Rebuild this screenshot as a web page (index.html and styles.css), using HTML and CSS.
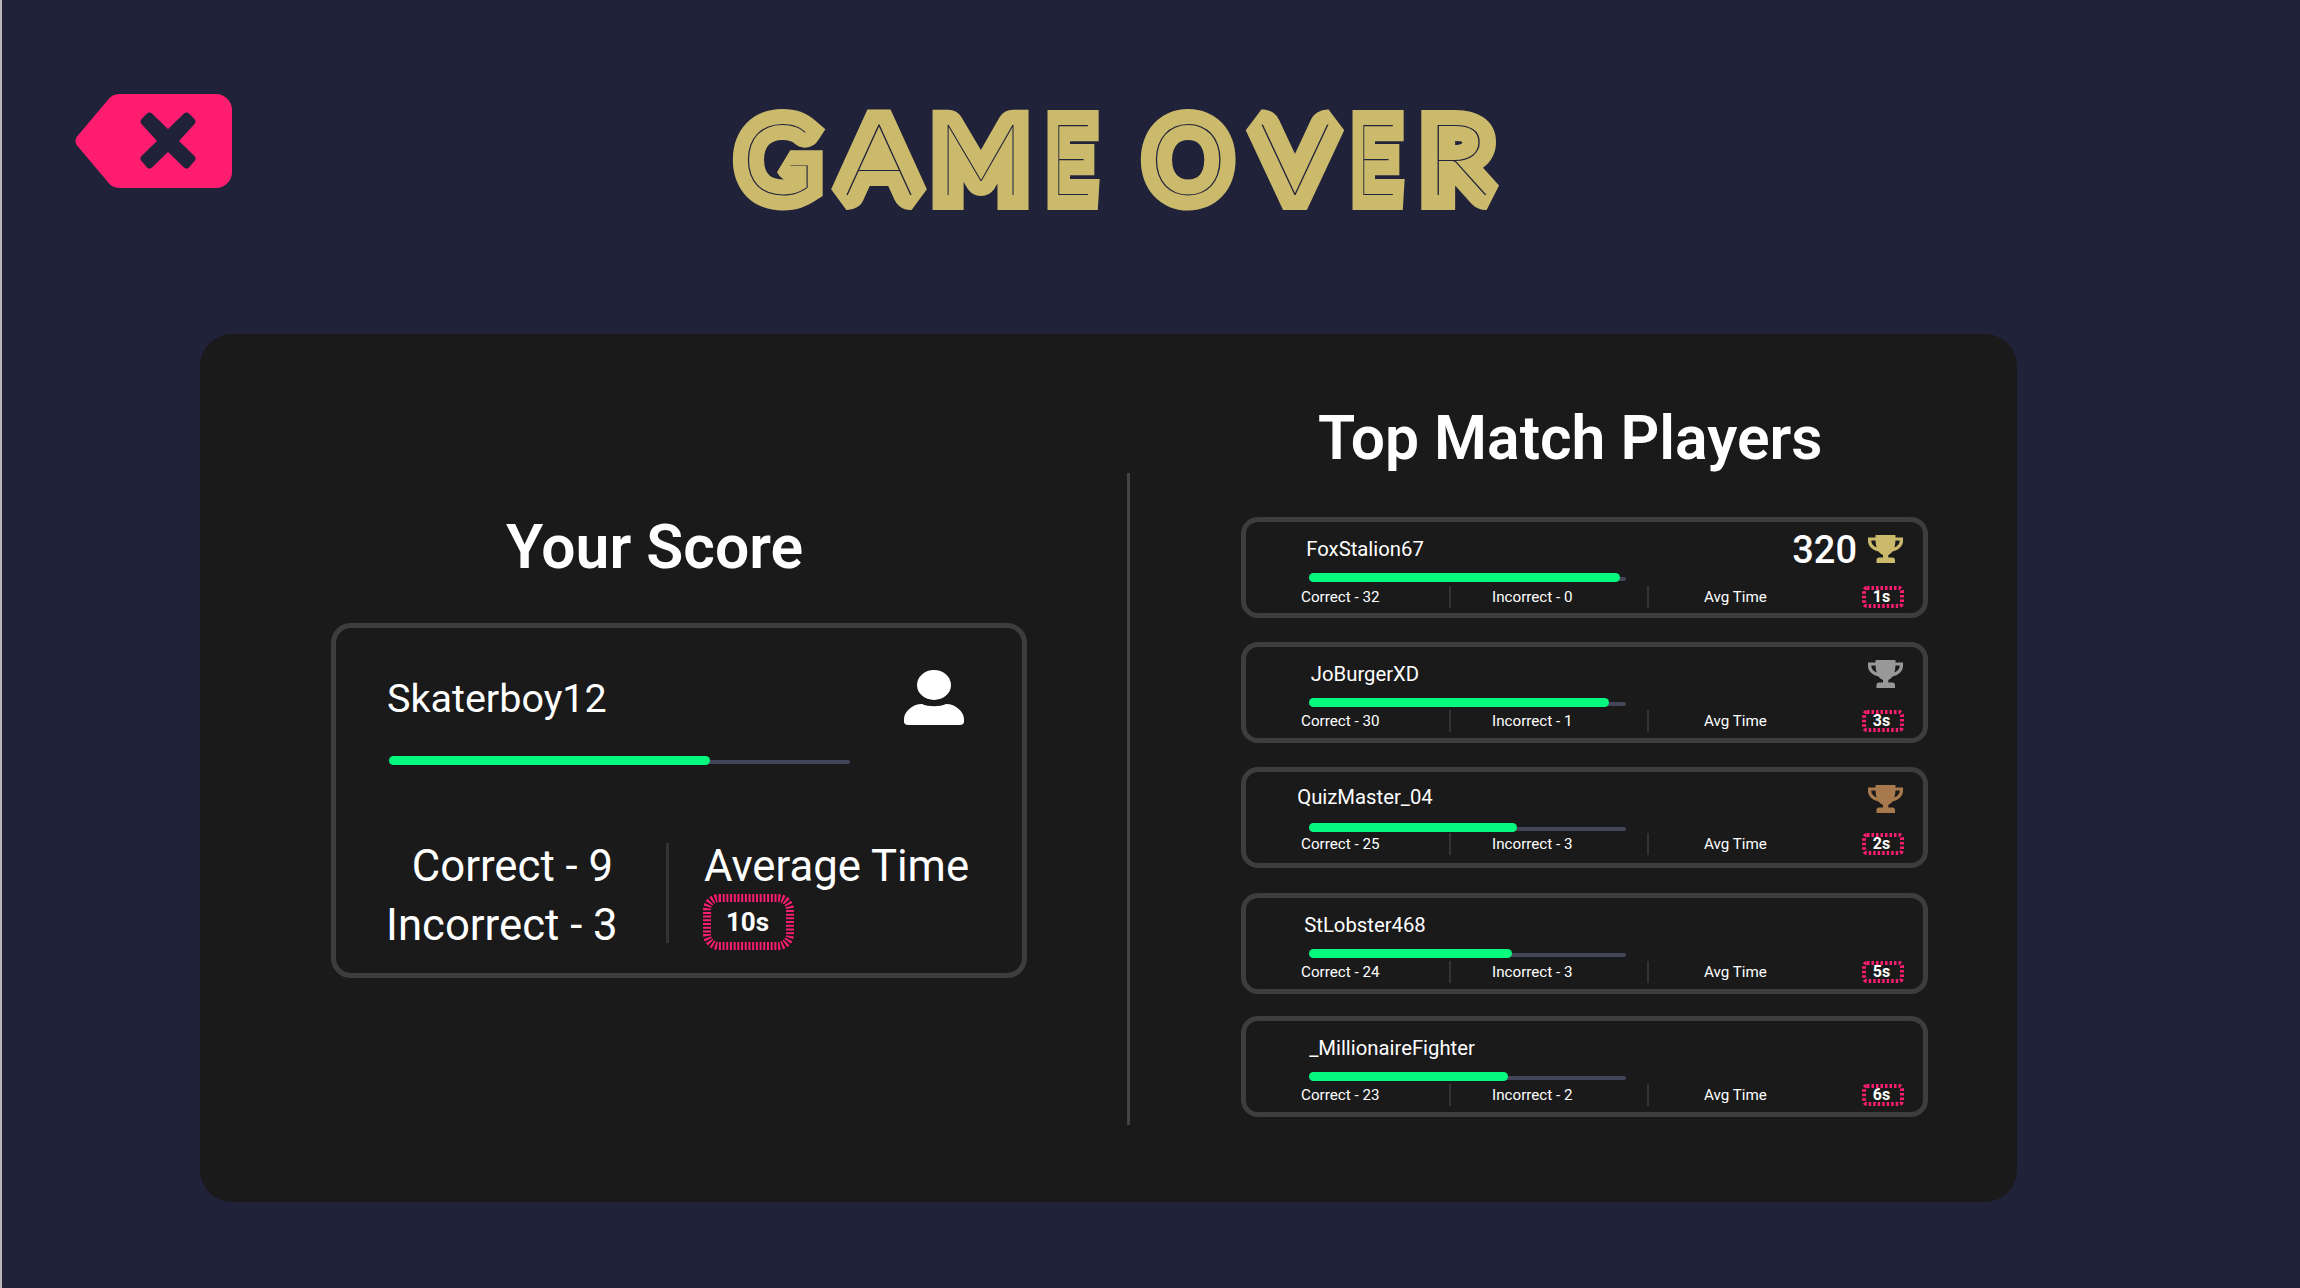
FILE: index.html
```html
<!DOCTYPE html>
<html lang="en">
<head>
<meta charset="utf-8">
<title>Game Over</title>
<link rel="stylesheet" href="styles.css">
</head>
<body>
<svg class="defs" width="0" height="0" aria-hidden="true">
  <symbol id="trophy" viewBox="0 0 35 28">
    <path class="cup" d="M7.500 0H27.500V2.500H35V6C35 11 31 15 24.500 16.500C23.500 18 22 19.300 20.300 20V22.500H24.500C26 22.500 27 23.500 27 25V28H8.500V25C8.500 23.500 9.500 22.500 11 22.500H15V20C13 19.300 11.500 18 10.500 16.500C4 15 0 11 0 6V2.500H7.500ZM3.300 5.500V6.300C3.300 8.800 5.300 11.300 8.600 12.600C8 10.500 7.600 8 7.500 5.500ZM31.700 5.500H27.500C27.400 8 27 10.500 26.400 12.600C29.700 11.300 31.700 8.800 31.700 6.300Z"/>
  </symbol>
</svg>
<header class="top">
  <button class="back" aria-label="Back">
    <svg viewBox="0 0 157 94" class="back-icon">
      <path class="back-shape" d="M45 0H141A16 16 0 0 1 157 16V78A16 16 0 0 1 141 94H45C41 94 37 92.500 34.500 90L2.500 52C0 49.500 0 44.500 2.500 42L34.500 4C37 1.500 41 0 45 0Z"/>
      <path class="back-x" d="M72 19.500C73.500 18 75.500 18 77 19.500L93 35 109 19.500C110.500 18 112.500 18 114 19.500L119.500 25C121 26.500 121 28.500 119.500 30L104 47 119.500 62C121 63.500 121 65.500 119.500 67L114 73.500C112.500 75 110.500 75 109 73.500L93 58 77 73.500C75.500 75 73.500 75 72 73.500L66.500 67C65 65.500 65 63.500 66.500 62L82 47 66.500 30C65 28.500 65 26.500 66.500 25Z"/>
    </svg>
  </button>
  <svg class="title" viewBox="0 0 790 130" role="img" aria-label="GAME OVER">
    <text class="title-text" y="105"><tspan x="13">G</tspan><tspan x="116" textLength="70" lengthAdjust="spacingAndGlyphs">A</tspan><tspan x="208">M</tspan><tspan x="322" textLength="42" lengthAdjust="spacingAndGlyphs">E</tspan> <tspan x="421">O</tspan><tspan x="531" textLength="72" lengthAdjust="spacingAndGlyphs">V</tspan><tspan x="627" textLength="42" lengthAdjust="spacingAndGlyphs">E</tspan><tspan x="697" textLength="64" lengthAdjust="spacingAndGlyphs">R</tspan></text>
  </svg>
</header>
<main class="panel">
  <section class="you">
    <h2 class="heading you-heading">Your Score</h2>
    <div class="score-card">
      <div class="score-head">
        <span class="score-name">Skaterboy12</span>
        <svg class="user-icon" viewBox="0 0 60 55">
          <ellipse class="user-fill" cx="30" cy="15" rx="17" ry="15"/>
          <path class="user-fill" d="M0 49C0 42 8 34 18 34C24 37 36 37 42 34C52 34 60 42 60 49V52C60 54 58 55 56 55H4C2 55 0 54 0 52Z"/>
        </svg>
      </div>
      <div class="bar bar-big"><div class="fill" style="width:69.6%"></div></div>
      <div class="score-stats">
        <div class="score-lines">
          <div class="line-correct">Correct - 9</div>
          <div>Incorrect - 3</div>
        </div>
        <div class="score-rule"></div>
        <div class="score-time">
          <div>Average Time</div>
          <div class="badge badge-big">
            <svg class="badge-line" viewBox="0 0 91 56"><rect class="dash-big" x="4" y="4" width="83" height="48" rx="12"/></svg>
            <span>10s</span>
          </div>
        </div>
      </div>
    </div>
  </section>
  <div class="panel-rule"></div>
  <section class="top-players">
    <h2 class="heading top-heading">Top Match Players</h2>
    <div class="players">
      <article class="player">
        <div class="player-head">
          <span class="player-name">FoxStalion67</span>
          <span class="player-score">320</span>
          <svg class="trophy gold"><use href="#trophy"/></svg>
        </div>
        <div class="bar"><div class="fill" style="width:98%"></div></div>
        <div class="player-stats">
          <span class="stat s1">Correct - 32</span><i class="rule"></i>
          <span class="stat s2">Incorrect - 0</span><i class="rule"></i>
          <span class="stat s3">Avg Time</span>
          <div class="badge"><svg class="badge-line" viewBox="0 0 42 22"><rect class="dash" x="2" y="2" width="38" height="18" rx="3"/></svg><span>1s</span></div>
        </div>
      </article>
      <article class="player">
        <div class="player-head">
          <span class="player-name">JoBurgerXD</span>
          <svg class="trophy silver"><use href="#trophy"/></svg>
        </div>
        <div class="bar"><div class="fill" style="width:94.500%"></div></div>
        <div class="player-stats">
          <span class="stat s1">Correct - 30</span><i class="rule"></i>
          <span class="stat s2">Incorrect - 1</span><i class="rule"></i>
          <span class="stat s3">Avg Time</span>
          <div class="badge"><svg class="badge-line" viewBox="0 0 42 22"><rect class="dash" x="2" y="2" width="38" height="18" rx="3"/></svg><span>3s</span></div>
        </div>
      </article>
      <article class="player">
        <div class="player-head">
          <span class="player-name">QuizMaster_04</span>
          <svg class="trophy bronze"><use href="#trophy"/></svg>
        </div>
        <div class="bar"><div class="fill" style="width:65.500%"></div></div>
        <div class="player-stats">
          <span class="stat s1">Correct - 25</span><i class="rule"></i>
          <span class="stat s2">Incorrect - 3</span><i class="rule"></i>
          <span class="stat s3">Avg Time</span>
          <div class="badge"><svg class="badge-line" viewBox="0 0 42 22"><rect class="dash" x="2" y="2" width="38" height="18" rx="3"/></svg><span>2s</span></div>
        </div>
      </article>
      <article class="player">
        <div class="player-head">
          <span class="player-name">StLobster468</span>
        </div>
        <div class="bar"><div class="fill" style="width:64%"></div></div>
        <div class="player-stats">
          <span class="stat s1">Correct - 24</span><i class="rule"></i>
          <span class="stat s2">Incorrect - 3</span><i class="rule"></i>
          <span class="stat s3">Avg Time</span>
          <div class="badge"><svg class="badge-line" viewBox="0 0 42 22"><rect class="dash" x="2" y="2" width="38" height="18" rx="3"/></svg><span>5s</span></div>
        </div>
      </article>
      <article class="player">
        <div class="player-head">
          <span class="player-name name-long">_MillionaireFighter</span>
        </div>
        <div class="bar"><div class="fill" style="width:62.800%"></div></div>
        <div class="player-stats">
          <span class="stat s1">Correct - 23</span><i class="rule"></i>
          <span class="stat s2">Incorrect - 2</span><i class="rule"></i>
          <span class="stat s3">Avg Time</span>
          <div class="badge"><svg class="badge-line" viewBox="0 0 42 22"><rect class="dash" x="2" y="2" width="38" height="18" rx="3"/></svg><span>6s</span></div>
        </div>
      </article>
    </div>
  </section>
</main>
</body>
</html>
```

FILE: styles.css
```css
* { box-sizing: border-box; }
html, body { margin: 0; height: 100%; }
body {
  width: 2300px;
  height: 1288px;
  overflow: hidden;
  background: #20223a;
  border-left: 2px solid #b9b9b9;
  font-family: Roboto, "Liberation Sans", sans-serif;
  color: #fff;
}
.defs { position: absolute; }

.top {
  height: 334px;
  display: flex;
  align-items: flex-start;
  padding: 94px 0 0 73px;
}
.back {
  width: 157px;
  height: 94px;
  padding: 0;
  border: 0;
  background: none;
  flex: none;
}
.back-icon { display: block; width: 157px; height: 94px; }
.back-shape { fill: #ff1d70; }
.back-x { fill: #20223a; }

.title {
  width: 790px;
  height: 130px;
  margin: -4px 0 0 496px;
  flex: none;
  overflow: visible;
}
.title-text {
  font-family: Lato, sans-serif;
  font-weight: 100;
  font-size: 100px;
  fill: #20223a;
  stroke: #cbb96c;
  stroke-width: 30px;
  stroke-linejoin: miter;
  stroke-miterlimit: 1.500;
  paint-order: stroke fill;
}

.panel {
  width: 1817px;
  height: 868px;
  margin-left: 198px;
  background: #1a1a1a;
  border-radius: 32px;
  display: flex;
  align-items: flex-start;
}
.you { width: 927px; padding: 179px 0 0 131px; flex: none; }
.heading { margin: 0; font-weight: 600; line-height: 70px; font-size: 60.600px; }
.you-heading { margin: 0 0 40px 175px; }

.score-card {
  width: 696px;
  height: 355px;
  border: 5px solid #3d3d3d;
  border-radius: 20px;
  padding: 0 0 0 52px;
}
.score-head {
  display: flex;
  justify-content: space-between;
  align-items: center;
  height: 72px;
  margin-top: 34px;
  padding-right: 58px;
}
.score-name { font-size: 39.500px; font-weight: 400; margin-left: -1px; }
.user-icon { width: 60px; height: 55px; margin-top: -2px; }
.user-fill { fill: #fff; }

.bar {
  position: relative;
  width: 317px;
  height: 9px;
  margin-left: 63px;
}
.bar::before {
  content: "";
  position: absolute;
  left: 0; right: 0; top: 4px;
  height: 4px;
  background: #434658;
  border-radius: 2px;
}
.fill {
  position: relative;
  height: 9px;
  background: #05f97f;
  border-radius: 5px;
}
.bar-big { width: 461px; margin: 22px 0 0 1px; }

.score-stats {
  display: flex;
  align-items: flex-start;
  margin-top: 72px;
  font-size: 43.700px;
  font-weight: 400;
  line-height: 59px;
}
.score-lines { width: 230px; margin-left: -2px; text-align: right; white-space: nowrap; }
.line-correct { padding-right: 3px; }
.score-rule { width: 3px; height: 100px; margin: 6px 0 0 50px; background: #333; flex: none; }
.score-time { margin-left: 35px; white-space: nowrap; }

.badge {
  position: relative;
  display: flex;
  align-items: center;
  justify-content: center;
  width: 42px;
  height: 22px;
  padding-right: 3px;
  font-size: 16px;
  font-weight: 700;
  line-height: 1;
  flex: none;
}
.badge-big { width: 91px; height: 56px; font-size: 26px; margin: -2px 0 0 -1px; padding-right: 2px; }
.badge-line { position: absolute; inset: 0; width: 100%; height: 100%; }
.dash-big, .dash { fill: none; stroke: #ff1d70; }
.dash-big { stroke-width: 8; stroke-dasharray: 2 1.700; }
.dash { stroke-width: 4; stroke-dasharray: 2.500 2; }

.panel-rule {
  width: 3px;
  height: 652px;
  margin-top: 139px;
  background: #444;
  flex: none;
}
.top-players { flex: 1; padding: 70px 0 0 111px; }
.top-heading { padding-left: 77px; margin-bottom: 43px; }

.players { display: flex; flex-direction: column; gap: 24px; }
.player {
  width: 687px;
  height: 101px;
  border: 5px solid #3d3d3d;
  border-radius: 17px;
  padding-top: 5px;
}
.player:nth-child(4) { margin-top: 1px; }
.player:nth-child(5) { margin-top: -2px; }
.player-head {
  position: relative;
  height: 46px;
  display: flex;
  align-items: center;
  justify-content: flex-end;
  padding-right: 20px;
}
.player-name {
  position: absolute;
  left: 1px;
  top: 10px;
  width: 236px;
  text-align: center;
  font-size: 20.300px;
  font-weight: 400;
  white-space: nowrap;
}
.player:nth-child(3) .player-name { top: 8px; }
.name-long { left: 28px; }
.player-score { font-size: 38px; font-weight: 500; margin-right: 11px; }
.trophy { width: 35px; height: 28px; margin-top: -2px; }
.cup { fill: currentColor; }
.gold { color: #cbb96c; }
.silver { color: #989898; }
.bronze { color: #a8794c; }

.player-stats {
  display: flex;
  align-items: center;
  height: 24px;
  margin-top: 2px;
  font-size: 15.200px;
  font-weight: 400;
}
.player:nth-child(1) .player-stats { margin-top: 3px; }
.player:nth-child(3) .player-stats { margin-top: 0; }
.stat { white-space: nowrap; }
.s1 { margin-left: 55px; width: 148px; }
.rule { width: 2px; height: 22px; background: #333; flex: none; }
.s2 { margin-left: 41px; width: 155px; }
.s3 { margin-left: 55px; width: 158px; }
```
